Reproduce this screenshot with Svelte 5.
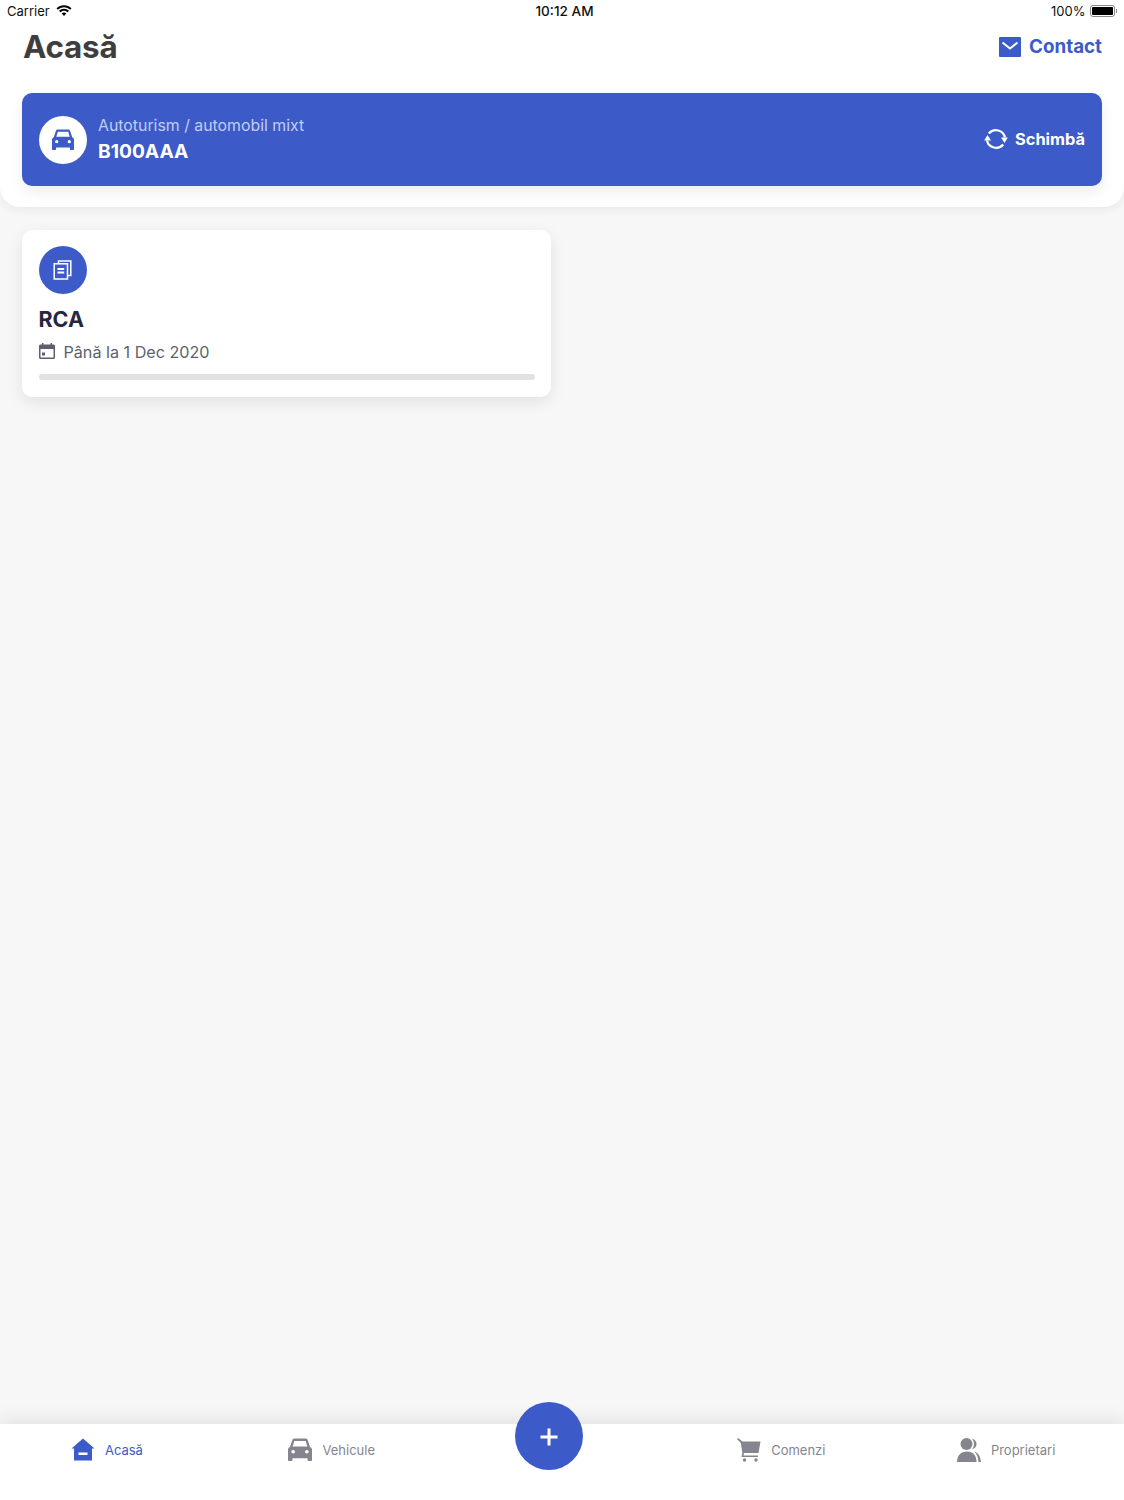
<script>
  const tabsLeft = [
    { id: 'home', label: 'Acasă', active: true },
    { id: 'car', label: 'Vehicule' }
  ]
  const tabsRight = [
    { id: 'cart', label: 'Comenzi' },
    { id: 'users', label: 'Proprietari' }
  ]
</script>

{#snippet carIcon(size)}
  <svg width={size} height={size} viewBox="2 2.500 20 19" fill="currentColor">
    <path d="M5.6 3.6C5.9 2.900 6.6 2.400 7.4 2.400h9.2c.8 0 1.500.5 1.800 1.200L20.400 9.400c1 .4 1.600 1.300 1.600 2.400V20.500c0 .4-.3.7-.7.7h-2.300c-.4 0-.7-.3-.7-.7v-1.700H5.700v1.700c0 .4-.3.7-.7.7H2.700c-.4 0-.7-.3-.7-.7v-8.700C2 10.700 2.600 9.800 3.600 9.400L5.600 3.600ZM7.300 4.400 5.900 9h12.200l-1.400-4.600H7.300ZM6.300 12a1.500 1.500 0 1 0 0 3 1.500 1.500 0 0 0 0-3Zm11.400 0a1.500 1.500 0 1 0 0 3 1.500 1.500 0 0 0 0-3Z" fill-rule="evenodd" />
  </svg>
{/snippet}

{#snippet tabIcon(id)}
  {#if id === 'home'}
    <svg width="24" height="24" viewBox="0 0 24 24">
      <path d="M12 .5 23.500 10.500H21V22.500H3V10.500H.5Z" fill="currentColor" />
      <rect x="7.500" y="14.500" width="9" height="2.500" fill="#fff" />
    </svg>
  {:else if id === 'car'}
    {@render carIcon(24)}
  {:else if id === 'cart'}
    <svg width="24" height="24" viewBox="0 0 24 24" fill="currentColor">
      <path d="M0 1 1 0 5.500 3.500H23.500L21.500 15H7L6.500 17.500H21V19H4.500L5.300 14.500 3.800 5Z" />
      <circle cx="7.500" cy="22" r="1.700" />
      <circle cx="19" cy="22" r="1.700" />
    </svg>
  {:else}
    <svg width="24" height="24" viewBox="0 0 24 24" fill="currentColor">
      <circle cx="9.500" cy="6" r="6" />
      <path d="M0 24c0-6.500 4-10.500 10-10.500s9.500 4 9.500 10.500Z" />
      <path d="M15 .8c3 .5 4.500 2.800 4.500 5.200s-1.500 4.700-4.500 5.200c1.300-1.500 2-3.200 2-5.200s-.7-3.700-2-5.200Z" />
      <path d="M17 13.500c4 .8 6.500 5 7 10.500h-2.500c-.3-4.500-1.500-8-4.500-10.500Z" />
    </svg>
  {/if}
{/snippet}

<div class="page">
  <header class="top">
    <div class="status">
      <div class="status-left">
        <span>Carrier</span>
        <svg width="16" height="12" viewBox="0 0 16 12" fill="#000">
          <path d="M8 2.200c2.400 0 4.500 1 6.100 2.500L15.500 3.300C13.500 1.300 10.900.2 8 .2S2.500 1.300.5 3.300l1.400 1.400C3.500 3.200 5.600 2.200 8 2.200Z" />
          <path d="M8 5.700c1.400 0 2.700.6 3.600 1.500l1.400-1.400C11.700 4.500 9.900 3.700 8 3.700S4.300 4.500 3 5.800l1.400 1.400C5.300 6.300 6.600 5.700 8 5.700Z" />
          <path d="M8 7.500c-.9 0-1.700.4-2.300 1L8 11l2.300-2.500c-.6-.6-1.400-1-2.300-1Z" />
        </svg>
      </div>
      <span class="clock">10:12 AM</span>
      <div class="status-right">
        <span>100%</span>
        <div class="battery"><div class="battery-fill"></div></div>
        <div class="battery-tip"></div>
      </div>
    </div>

    <div class="title-row">
      <h1>Acasă</h1>
      <div class="contact">
        <svg width="22" height="20" viewBox="0 0 22 20">
          <rect width="22" height="20" rx="1" fill="currentColor" />
          <path d="M3.500 5.500 11 11.500 18.500 5.500" fill="none" stroke="#fff" stroke-width="2" />
        </svg>
        <span>Contact</span>
      </div>
    </div>

    <div class="vehicle">
      <div class="circle white">{@render carIcon(22)}</div>
      <div class="vehicle-text">
        <div class="vehicle-type">Autoturism / automobil mixt</div>
        <div class="vehicle-plate">B100AAA</div>
      </div>
      <div class="change">
        <svg width="24" height="24" viewBox="0 0 24 24" fill="none" stroke="currentColor" stroke-width="2.200">
          <path d="M4.800 6.500A9.300 9.300 0 0 1 21 10.500" />
          <path d="M19.200 17.500A9.300 9.300 0 0 1 3 13.500" />
          <path d="M17 10.500H23.800L20.500 16Z" fill="currentColor" stroke="none" />
          <path d="M.2 13.500H7L3.500 8Z" fill="currentColor" stroke="none" />
        </svg>
        <span>Schimbă</span>
      </div>
    </div>
  </header>

  <main class="content">
    <section class="card">
      <div class="circle blue">
        <svg width="20" height="20" viewBox="0 0 20 20" fill="none" stroke="currentColor" stroke-width="1.500">
          <path d="M5.500 3.500V1H17.800V15.500H15" />
          <rect x="1.200" y="3.800" width="13.300" height="15.200" />
          <path d="M4.500 9H11.200M4.500 12.500H11.200" stroke-width="1.800" />
        </svg>
      </div>
      <h2>RCA</h2>
      <div class="date">
        <svg width="16" height="16" viewBox="0 0 16 16" fill="currentColor">
          <path fill-rule="evenodd" d="M3 0h1.500v1.500h7V0H13v1.500h1.500c.8 0 1.500.7 1.500 1.500v11.500c0 .8-.7 1.500-1.500 1.500h-13C.7 16 0 15.300 0 14.500V3c0-.8.7-1.500 1.500-1.500H3ZM1.500 6v8.500h13V6Z" />
          <rect x="3" y="9.500" width="3" height="3" />
        </svg>
        <span>Până la 1 Dec 2020</span>
      </div>
      <div class="progress"></div>
    </section>
  </main>

  <nav class="tabbar">
    {#each tabsLeft as tab}
      <div class="tab" class:active={tab.active}>
        {@render tabIcon(tab.id)}
        <span>{tab.label}</span>
      </div>
    {/each}
    <div class="fab-slot">
      <div class="fab">
        <svg width="20" height="20" viewBox="0 0 20 20">
          <path d="M10 1.500V18.500M1.500 10H18.500" stroke="#fff" stroke-width="3" />
        </svg>
      </div>
    </div>
    {#each tabsRight as tab}
      <div class="tab">
        {@render tabIcon(tab.id)}
        <span>{tab.label}</span>
      </div>
    {/each}
  </nav>
</div>

<style>
  :global(body) {
    background: #f7f7f7;
  }
  .page {
    min-height: 1500px;
    display: flex;
    flex-direction: column;
    font-family: Inter, 'Noto Sans', sans-serif;
    background: #f7f7f7;
  }
  .top {
    background: #fff;
    height: 207px;
    box-sizing: border-box;
    padding: 0 22px;
    border-radius: 0 0 20px 20px;
    box-shadow: 0 3px 10px rgba(0, 0, 0, 0.06);
  }
  .status {
    height: 22px;
    margin: 0 -22px;
    padding: 0 7px;
    display: grid;
    grid-template-columns: 1fr auto 1fr;
    align-items: center;
    font-size: 13px;
    color: #111;
  }
  .status-left {
    display: flex;
    align-items: center;
    gap: 6px;
  }
  .clock {
    font-size: 13.600px;
    font-weight: 500;
    margin-left: 5px;
  }
  .status-right {
    display: flex;
    align-items: center;
    justify-content: flex-end;
  }
  .battery {
    width: 25px;
    height: 12px;
    margin-left: 4px;
    box-sizing: border-box;
    border: 1px solid #888;
    border-radius: 3px;
    padding: 1px;
  }
  .battery-fill {
    height: 100%;
    background: #000;
    border-radius: 1px;
  }
  .battery-tip {
    width: 1.500px;
    height: 4px;
    margin-left: 1px;
    background: #888;
  }
  .title-row {
    height: 49px;
    display: flex;
    align-items: center;
    justify-content: space-between;
  }
  h1 {
    margin: 0 0 0 1px;
    font-size: 31.400px;
    font-weight: 700;
    letter-spacing: -0.2px;
    color: #3e3e40;
  }
  .contact {
    display: flex;
    align-items: center;
    gap: 8px;
    font-size: 18.800px;
    font-weight: 700;
    color: #3c5bc9;
  }
  .vehicle {
    margin-top: 22px;
    height: 93px;
    box-sizing: border-box;
    padding: 0 17px;
    display: flex;
    align-items: center;
    background: #3c5bc9;
    border-radius: 10px;
    color: #fff;
    box-shadow: 0 6px 14px rgba(0, 0, 0, 0.07);
  }
  .circle {
    width: 48px;
    height: 48px;
    flex: none;
    border-radius: 50%;
    display: flex;
    align-items: center;
    justify-content: center;
  }
  .circle.white {
    background: #fff;
    color: #3c5bc9;
  }
  .circle.blue {
    background: #3c5bc9;
    color: #fff;
  }
  .vehicle-text {
    margin-left: 11px;
    flex: 1;
  }
  .vehicle-type {
    font-size: 15.850px;
    line-height: 24px;
    color: #c3cdf0;
  }
  .vehicle-plate {
    font-size: 19.200px;
    line-height: 28px;
    font-weight: 700;
    margin-top: -1px;
  }
  .change {
    display: flex;
    align-items: center;
    gap: 7px;
    font-size: 16.400px;
    font-weight: 700;
    margin-top: -2px;
  }
  .content {
    flex: 1;
    padding: 23px 22px;
  }
  .card {
    width: 529px;
    height: 167px;
    box-sizing: border-box;
    padding: 16px 16.500px;
    background: #fff;
    border-radius: 10px;
    box-shadow: 0 5px 16px rgba(0, 0, 0, 0.09);
  }
  h2 {
    margin: 11px 0 0;
    font-size: 21.500px;
    line-height: 28px;
    font-weight: 700;
    color: #25273f;
  }
  .date {
    margin-top: 7px;
    height: 24px;
    display: flex;
    align-items: center;
    gap: 9px;
    font-size: 16.150px;
    color: #5e5f6e;
  }
  .date svg {
    margin-top: -3px;
  }
  .progress {
    margin-top: 10px;
    height: 6px;
    border-radius: 3px;
    background: #e2e2e2;
  }
  .tabbar {
    height: 76px;
    background: #fff;
    display: grid;
    grid-template-columns: repeat(5, 1fr);
    box-shadow: 0 -6px 16px rgba(0, 0, 0, 0.08);
  }
  .tab {
    height: 52px;
    padding-right: 11px;
    display: flex;
    align-items: center;
    justify-content: center;
    gap: 10px;
    font-size: 13px;
    color: #85858f;
  }
  .tab.active {
    color: #3c5bc9;
  }
  .fab-slot {
    display: flex;
    justify-content: center;
    padding-right: 26px;
  }
  .fab {
    width: 68px;
    height: 68px;
    margin-top: -22px;
    border-radius: 50%;
    background: #3c5bc9;
    display: flex;
    align-items: center;
    justify-content: center;
    padding-top: 2px;
    box-sizing: border-box;
  }
</style>
